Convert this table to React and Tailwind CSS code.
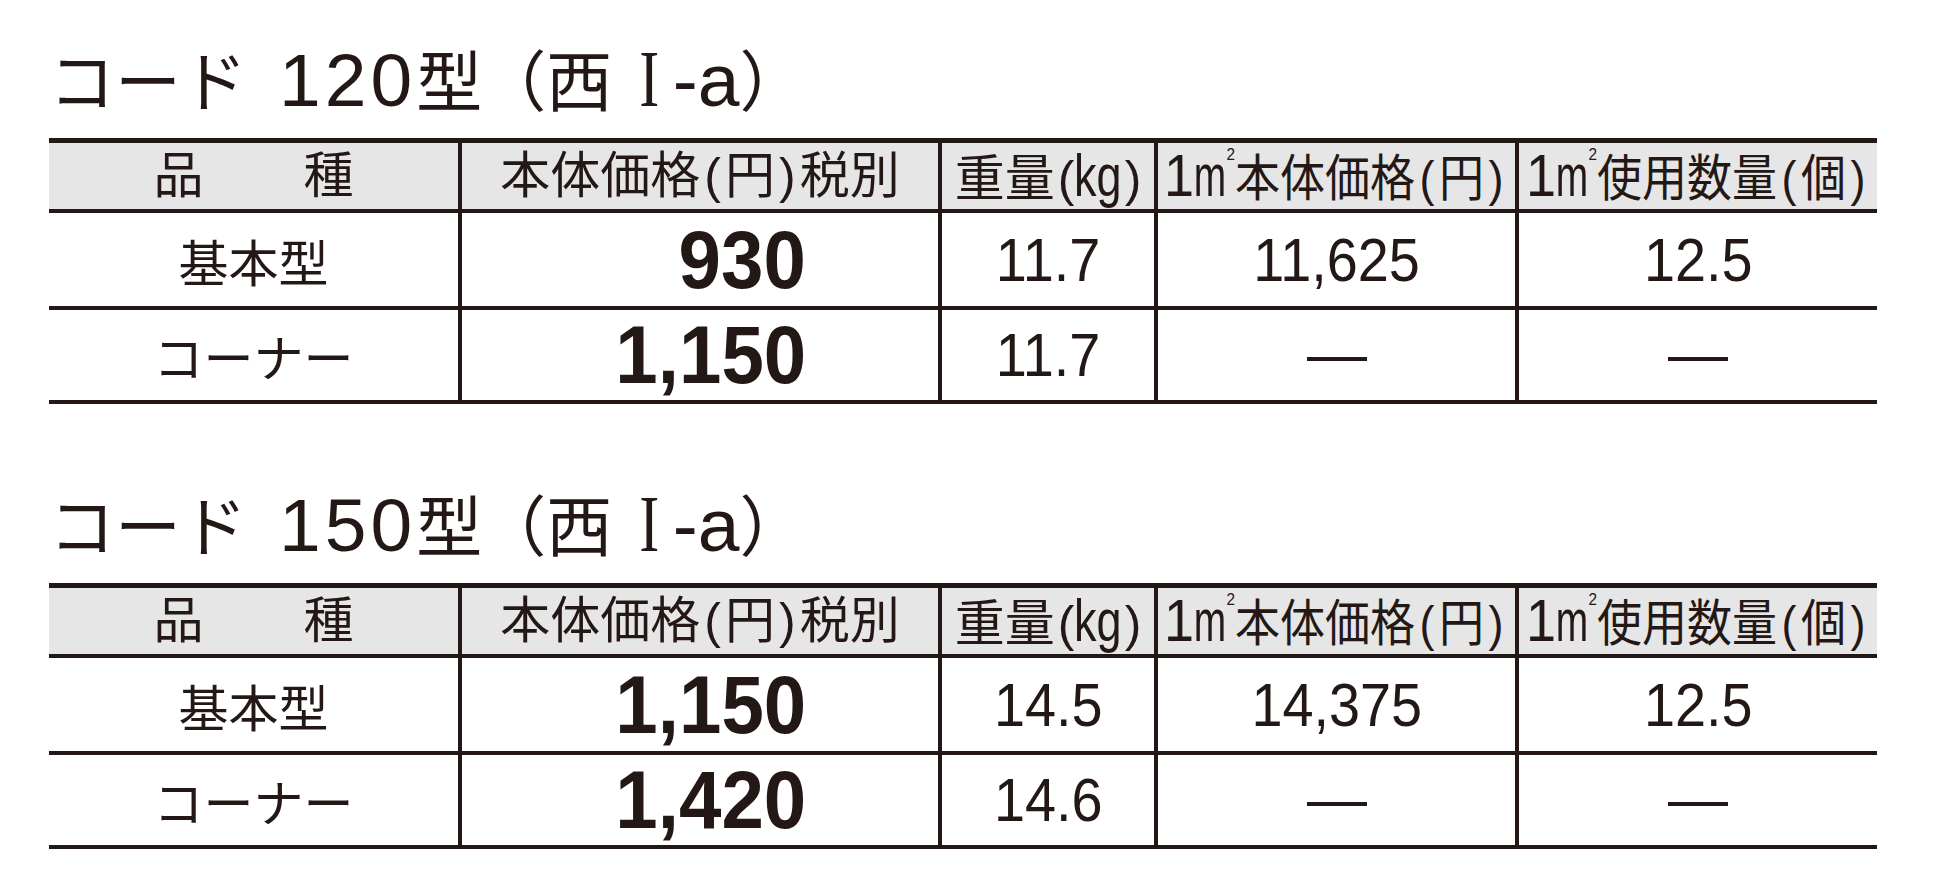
import React from "react"

const jp = "font-['Noto_Sans_CJK_JP',sans-serif]"
const lat = "font-['Liberation_Sans','Noto_Sans_CJK_JP',sans-serif]"
const serif = "font-['Liberation_Serif',serif]"

const tables = [
  {
    num: "120",
    rows: [
      { name: "基本型", price: "930", weight: "11.7", per: "11,625", qty: "12.5" },
      { name: "コーナー", price: "1,150", weight: "11.7", per: null, qty: null },
    ],
  },
  {
    num: "150",
    rows: [
      { name: "基本型", price: "1,150", weight: "14.5", per: "14,375", qty: "12.5" },
      { name: "コーナー", price: "1,420", weight: "14.6", per: null, qty: null },
    ],
  },
]

function Title({ num }) {
  return (
    <div className="h-[138px] pt-[39px]">
      <div className="flex items-baseline whitespace-nowrap">
        <span className={jp + " text-[66px] leading-none"}>コード</span>
        <span className={lat + " ml-[32px] text-[75px] leading-none tracking-[4px]"}>{num}</span>
        <span className={jp + " text-[66px] leading-none"}>型</span>
        <span className={jp + " -ml-[2px] text-[66px] leading-none"}>（西</span>
        <span className={serif + " ml-[24px] inline-block scale-x-75 text-[80px] leading-none"}>I</span>
        <span className={lat + " ml-[10px] text-[75px] leading-none"}>-a</span>
        <span className={jp + " text-[66px] leading-none"}>）</span>
      </div>
    </div>
  )
}

function Paren({ children, wide }) {
  return <span className={wide ? "mx-[5px]" : "mx-[4px]"}>{children}</span>
}

function Sq() {
  return (
    <>
      <span className="text-[60px]">1</span>
      <span className="inline-block origin-left scale-x-[0.72] -mr-[14px] text-[60px]">m</span>
      <span className="text-[17px] align-top">2</span>
    </>
  )
}

function Cell({ children, head, last, className = "" }) {
  return (
    <div
      className={
        "flex items-center border-b-4 border-[#231815] " +
        (last ? "" : "border-r-4 ") +
        (head ? "bg-[#e6e6e6] " : "") +
        (className || "justify-center")
      }
    >
      {children}
    </div>
  )
}

function Dash() {
  return <div className="mt-[8px] h-[4px] w-[60px] bg-[#231815]" />
}

function Num({ children }) {
  return <span className={lat + " inline-block scale-x-90 text-[62px] leading-none"}>{children}</span>
}

function Table({ rows }) {
  return (
    <div className="w-[1828px] border-t-[5px] border-[#231815]">
      <div className="grid grid-cols-[413px_480px_216px_361px_358px] grid-rows-[70px_97px_94px]">
        <Cell head>
          <span className={lat + " text-[50px] leading-none"}>品　　種</span>
        </Cell>
        <Cell head>
          <span className={lat + " text-[50px] leading-none whitespace-nowrap"}>
            本体価格<Paren>(</Paren>円<Paren>)</Paren>税別
          </span>
        </Cell>
        <Cell head>
          <span className={lat + " text-[50px] leading-none whitespace-nowrap"}>
            重量<span className="ml-[3px]">(</span>
            <span className="inline-block scale-x-75 -mx-[8px] text-[60px]">kg</span>
            <span className="ml-[3px]">)</span>
          </span>
        </Cell>
        <Cell head>
          <span className={lat + " inline-block scale-x-90 text-[50px] leading-none whitespace-nowrap"}>
            <Sq />本体価格<Paren wide>(</Paren>円<Paren wide>)</Paren>
          </span>
        </Cell>
        <Cell head last>
          <span className={lat + " inline-block scale-x-90 text-[50px] leading-none whitespace-nowrap"}>
            <Sq />使用数量<Paren wide>(</Paren>個<Paren wide>)</Paren>
          </span>
        </Cell>

        {rows.map((r) => (
          <React.Fragment key={r.name}>
            <Cell>
              <span className={jp + " text-[50px] leading-none"}>{r.name}</span>
            </Cell>
            <Cell className="justify-end pr-[132px]">
              <span className={lat + " inline-block origin-right scale-x-[0.93] font-bold text-[82px] leading-none"}>
                {r.price}
              </span>
            </Cell>
            <Cell>
              <Num>{r.weight}</Num>
            </Cell>
            <Cell>{r.per ? <Num>{r.per}</Num> : <Dash />}</Cell>
            <Cell last>{r.qty ? <Num>{r.qty}</Num> : <Dash />}</Cell>
          </React.Fragment>
        ))}
      </div>
    </div>
  )
}

export default function App() {
  return (
    <div className="min-h-[882px] w-[1956px] bg-white pl-[49px] text-[#231815]">
      {tables.map((t, i) => (
        <section key={t.num} className={i > 0 ? "mt-[41px]" : ""}>
          <Title num={t.num} />
          <Table rows={t.rows} />
        </section>
      ))}
    </div>
  )
}
